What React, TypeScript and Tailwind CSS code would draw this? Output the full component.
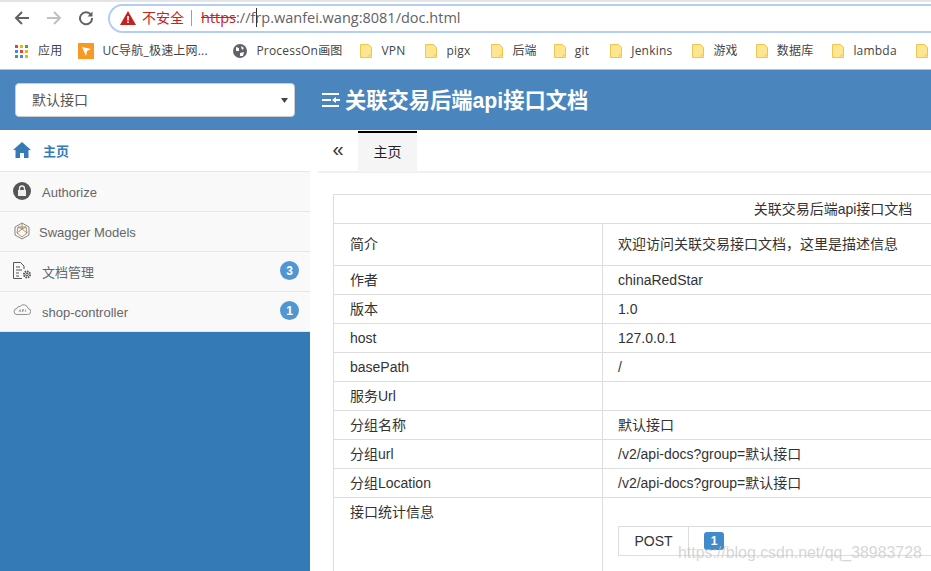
import React from 'react'

const sans = "font-['Liberation_Sans','Noto_Sans_CJK_SC',sans-serif]"

const bookmarks = [
  { label: 'VPN', gap: 'mr-[20px]' },
  { label: 'pigx', gap: 'mr-[21px]' },
  { label: '后端', gap: 'mr-[17px]' },
  { label: 'git', gap: 'mr-[21px]' },
  { label: 'Jenkins', gap: 'mr-[20px]' },
  { label: '游戏', gap: 'mr-[18px]' },
  { label: '数据库', gap: 'mr-[19px]' },
  { label: 'lambda', gap: 'mr-[19px]' },
  { label: '', gap: '' },
]

const rows: { name: string; value: string; height: string }[] = [
  { name: '简介', value: '欢迎访问关联交易接口文档，这里是描述信息', height: 'h-[42px]' },
  { name: '作者', value: 'chinaRedStar', height: 'h-[29px]' },
  { name: '版本', value: '1.0', height: 'h-[29px]' },
  { name: 'host', value: '127.0.0.1', height: 'h-[29px]' },
  { name: 'basePath', value: '/', height: 'h-[29px]' },
  { name: '服务Url', value: '', height: 'h-[29px]' },
  { name: '分组名称', value: '默认接口', height: 'h-[29px]' },
  { name: '分组url', value: '/v2/api-docs?group=默认接口', height: 'h-[29px]' },
  { name: '分组Location', value: '/v2/api-docs?group=默认接口', height: 'h-[29px]' },
]

function FolderIcon() {
  return (
    <svg width="12" height="14" viewBox="0 0 12 14" className="shrink-0">
      <path d="M.5.5h8l3 3v10H.5z" fill="#fde68f" stroke="#eec64e" />
      <path d="M9 11h2.500v2.500H9z" fill="#fde68f" stroke="#eec64e" strokeWidth=".7" />
    </svg>
  )
}

function AppsIcon() {
  const colors = ['#e4452f', '#f4b400', '#34a853', '#4285f4', '#e4452f', '#f4b400', '#34a853', '#4285f4', '#f4b400']
  return (
    <div className="grid grid-cols-3 gap-[2px] w-[13px] shrink-0">
      {colors.map((c, i) => (
        <span key={i} className="block w-[3px] h-[3px]" style={{ background: c }} />
      ))}
    </div>
  )
}

function ChromeBar() {
  return (
    <div className="h-[70px] shrink-0 bg-white border-b border-[#bdbdbd] border-t-2 border-t-[#e4e4e4] flex flex-col whitespace-nowrap font-['Open_Sans','Noto_Sans_CJK_SC',sans-serif]">
      <div className="h-[32px] flex items-center shrink-0">
        <svg width="16" height="16" viewBox="0 0 16 16" className="ml-[14px]" fill="none" stroke="#5f6368" strokeWidth="2">
          <path d="M15 8H2M8 2 2 8l6 6" />
        </svg>
        <svg width="16" height="16" viewBox="0 0 16 16" className="ml-[16px]" fill="none" stroke="#bdc1c6" strokeWidth="2">
          <path d="M1 8h13M8 2l6 6-6 6" />
        </svg>
        <svg width="16" height="16" viewBox="0 0 16 16" className="ml-[16px]" fill="none" stroke="#5f6368" strokeWidth="2">
          <path d="M13 5a6 6 0 1 0 1 3" />
          <path d="M14.500 1.500v5h-5z" fill="#5f6368" stroke="none" />
        </svg>
        <div className="ml-[14px] h-[29px] grow rounded-l-full border-2 border-r-0 border-[#b4cdf5] flex items-center pl-[10px]">
          <svg width="16" height="14" viewBox="0 0 16 14">
            <path d="M8 0l8 14H0z" fill="#c5221f" />
            <path d="M7.200 5h1.600v4.500H7.200zM7.200 10.500h1.600V12H7.200z" fill="#fff" />
          </svg>
          <span className="ml-[6px] text-[14px] leading-none text-[#c5221f]">不安全</span>
          <span className="ml-[7px] w-px h-[16px] bg-[#9aa0a6]" />
          <span className="ml-[9px] text-[14.5px] leading-none text-[#c5221f] line-through">https</span>
          <span className="text-[14.5px] leading-none text-[#5f6368] relative">
            ://frp.wanfei.wang:8081/doc.html
            <span className="absolute left-[20px] -top-[3px] w-px h-[19px] bg-[#333]" />
          </span>
        </div>
      </div>
      <div className="flex items-center grow text-[12px] text-[#444] tracking-[0.2px] pb-[1px]">
        <div className="ml-[15px]"><AppsIcon /></div>
        <span className="ml-[10px] mr-[16px]">应用</span>
        <svg width="16" height="16" viewBox="0 0 16 16" className="shrink-0">
          <rect width="16" height="16" fill="#f79a23" />
          <path d="M4 4l9 2-4 2-1 5z" fill="#fff" />
        </svg>
        <span className="ml-[8px] w-[105px] mr-[26px]">UC导航_极速上网...</span>
        <svg width="14" height="14" viewBox="0 0 14 14" className="shrink-0">
          <circle cx="7" cy="7" r="7" fill="#5f6368" />
          <path d="M3 3l3 1 0 3-3 0zM8 2l3 2-2 2zM7 9l4-1-1 4-3 0z" fill="#fff" />
        </svg>
        <span className="ml-[9px] w-[85px] mr-[19px]">ProcessOn画图</span>
        {bookmarks.map((b) => (
          <div key={b.label} className={`flex items-center shrink-0 ${b.gap}`}>
            <FolderIcon />
            {b.label && <span className="ml-[9px]">{b.label}</span>}
          </div>
        ))}
      </div>
    </div>
  )
}

function HomeIcon() {
  return (
    <svg width="18" height="16" viewBox="0 0 18 16">
      <path d="M9 0 0 8h2.500v8h4.500v-5h4v5h4.500V8H18z" fill="#337ab7" />
    </svg>
  )
}

function LockIcon() {
  return (
    <svg width="18" height="18" viewBox="0 0 18 18">
      <circle cx="9" cy="9" r="9" fill="#555" />
      <rect x="5" y="8" width="8" height="6" fill="#eee" />
      <path d="M6.500 8V6.500a2.500 2.500 0 0 1 5 0V8" fill="none" stroke="#eee" strokeWidth="1.300" />
    </svg>
  )
}

function ModelsIcon() {
  return (
    <svg width="16" height="18" viewBox="0 0 16 18" fill="none" stroke="#777" strokeWidth=".9">
      <path d="M8 1l7 4v8l-7 4-7-4V5z" />
      <path d="M4 5h8l1 6-5 4-5-4zM8 1v6l5 4M8 7l-5 4M4 5l4 2 4-2" stroke="#a5835f" />
    </svg>
  )
}

function DocGearIcon() {
  return (
    <svg width="19" height="18" viewBox="0 0 19 18" fill="none" stroke="#555" strokeWidth="1" className="shrink-0">
      <path d="M9 16.500H.5V.5h7l3.500 3.500v3" />
      <path d="M3 5h4M3 8h6M3 11h3M3 14h3" />
      <circle cx="14" cy="12.500" r="3" strokeWidth="2" strokeDasharray="1.500 .8" />
      <circle cx="14" cy="12.500" r="1.200" />
    </svg>
  )
}

function CloudApiIcon() {
  return (
    <svg width="18" height="12" viewBox="0 0 18 12" fill="none" stroke="#777" strokeWidth=".8" className="-mt-[3px]">
      <path d="M4 11.500h10.500a3 3 0 0 0 .5-6A4.500 4.500 0 0 0 7 3.500 2.500 2.500 0 0 0 4 5.500a3 3 0 0 0 0 6z" />
      <path d="M6 9l1-2.500L8 9M9.500 9V6.500h1.200v1.300H9.500M12.500 6.500V9" strokeWidth=".6" />
    </svg>
  )
}

function MenuRow({ icon, label, badge, active, labelPad }: {
  icon: React.ReactNode
  label: string
  badge?: number
  active?: boolean
  labelPad: string
}) {
  return (
    <div className={`flex items-center pl-[13px] pr-[11px] border-b border-[#e7e7e7] ${active ? 'bg-white h-[42px]' : 'bg-[#f9f9f9] h-[40px]'}`}>
      <span className="w-[18px] flex justify-center shrink-0 -mt-[2px]">{icon}</span>
      <span className={`${labelPad} mt-[2px] text-[13px] ${active ? 'text-[#337ab7] font-bold' : 'text-[#666]'}`}>{label}</span>
      {badge !== undefined && (
        <span className="ml-auto w-[19px] h-[19px] -mt-[2px] rounded-full bg-[#5196d2] text-white text-[12px] font-bold flex items-center justify-center">
          {badge}
        </span>
      )}
    </div>
  )
}

function Sidebar() {
  return (
    <div className="w-[310px] shrink-0 bg-[#337ab7] flex flex-col">
      <MenuRow active icon={<HomeIcon />} label="主页" labelPad="ml-[12px]" />
      <MenuRow icon={<LockIcon />} label="Authorize" labelPad="ml-[11px]" />
      <MenuRow icon={<ModelsIcon />} label="Swagger Models" labelPad="ml-[8px]" />
      <MenuRow icon={<DocGearIcon />} label="文档管理" badge={3} labelPad="ml-[11px]" />
      <MenuRow icon={<CloudApiIcon />} label="shop-controller" badge={1} labelPad="ml-[11px]" />
    </div>
  )
}

function DocTable() {
  return (
    <div className="w-[1000px] ml-[15px] mt-[21px] border border-[#ddd] border-b-0 text-[14px] text-[#333]">
      <div className="h-[29px] flex items-center justify-center border-b border-[#ddd]">
        关联交易后端api接口文档
      </div>
      {rows.map((r) => (
        <div key={r.name} className={`flex border-b border-[#ddd] ${r.height}`}>
          <div className="w-[269px] shrink-0 pl-[16px] flex items-center border-r border-[#ddd]">{r.name}</div>
          <div className="pl-[15px] flex items-center">{r.value}</div>
        </div>
      ))}
      <div className="flex h-[90px]">
        <div className="w-[269px] shrink-0 pl-[16px] pt-[4px] border-r border-[#ddd]">接口统计信息</div>
        <div className="pl-[15px] pt-[28px]">
          <div className="flex w-[500px] h-[30px] border border-[#ddd]">
            <div className="w-[70px] border-r border-[#ddd] flex items-center justify-center">POST</div>
            <div className="pl-[15px] pt-[5px]">
              <span className="block w-[20px] h-[18px] rounded-[3px] bg-[#428bca] text-white text-[12px] font-bold text-center leading-[18px]">1</span>
            </div>
          </div>
        </div>
      </div>
    </div>
  )
}

export default function App() {
  return (
    <div className={`w-[931px] h-[571px] overflow-hidden bg-white relative flex flex-col ${sans}`}>
      <ChromeBar />
      <div className="h-[60px] bg-[#4a86bd] flex items-center shrink-0">
        <div className="ml-[15px] w-[280px] h-[34px] bg-white rounded-[4px] border border-[#ccc] flex items-center pl-[16px] pr-[6px] text-[14px] text-[#555]">
          默认接口
          <svg width="7" height="5" viewBox="0 0 7 5" className="ml-auto">
            <path d="M0 0h7L3.500 5z" fill="#444" />
          </svg>
        </div>
        <svg width="18" height="14" viewBox="0 0 18 14" className="ml-[27px]" fill="#fff">
          <path d="M0 0h17v2H0zM0 12h17v2H0zM0 6h9v2H0zM18 6v2h-4v2l-4-3 4-3v2z" />
        </svg>
        <span className="ml-[5px] mt-[3px] text-[21.25px] font-bold text-white">关联交易后端api接口文档</span>
      </div>
      <div className="flex grow min-h-0">
        <Sidebar />
        <div className="grow min-w-0 overflow-hidden">
          <div className="ml-[8px] h-[43px] flex border-b-2 border-[#f0f0f0]">
            <span className="w-[40px] flex items-center justify-center pb-[3px] text-[20px] leading-none text-[#333]">«</span>
            <div className="w-[59px] h-[41px] mt-[1px] bg-[#f5f5f5] border-t-2 border-black flex items-center justify-center text-[14px] text-[#222]">主页</div>
          </div>
          <div className="ml-[8px]">
            <DocTable />
          </div>
        </div>
      </div>
      <span className="absolute left-[678px] top-[544px] text-[15.9px] leading-[18px] text-[#c4c4c4]/70">https://blog.csdn.net/qq_38983728</span>
    </div>
  )
}
